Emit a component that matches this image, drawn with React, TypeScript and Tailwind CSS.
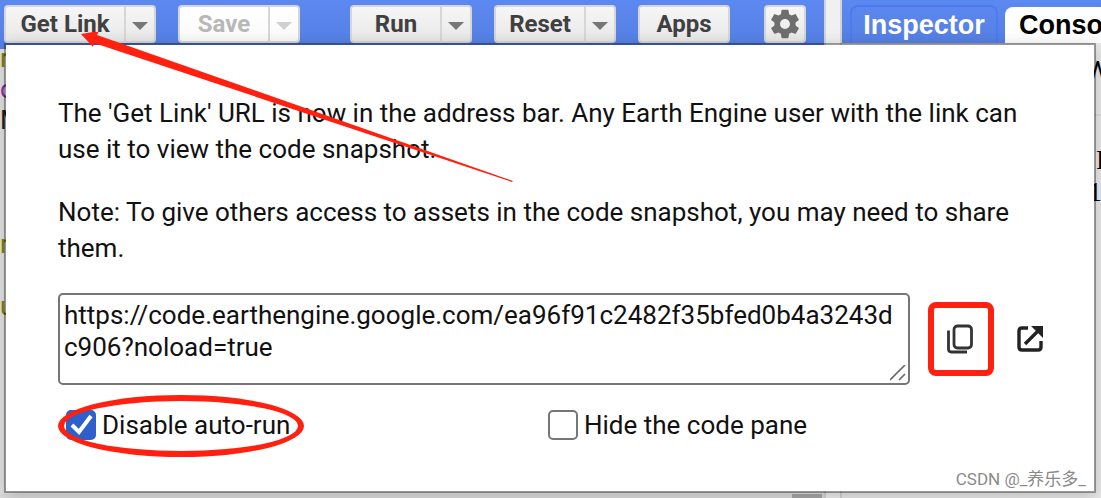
import { useState } from "react";

const buttonStyle =
  "h-[38px] border-2 border-[#d6d6d6] bg-linear-to-b from-[#f6f6f6] to-[#e8e8e8] text-[24px] leading-8 font-bold text-[#404040]";

interface SplitButtonProps {
  label: string;
  className: string;
  disabled?: boolean;
}

function SplitButton({ label, className, disabled }: SplitButtonProps) {
  return (
    <div className={`flex shrink-0 ${className}`}>
      <button
        disabled={disabled}
        className={`${buttonStyle} flex-1 rounded-l-sm border-r-0 disabled:from-white disabled:to-[#fafafa] disabled:text-[#b8b8b8]`}
      >
        {label}
      </button>
      <button
        disabled={disabled}
        aria-label={`${label} options`}
        className={`${buttonStyle} flex w-8 items-center justify-center rounded-r-sm disabled:from-white disabled:to-[#fafafa] disabled:text-[#d4d4d4]`}
      >
        <svg
          width="16"
          height="8"
          viewBox="0 0 16 8"
          className={disabled ? "mt-1 fill-[#d0d0d0]" : "mt-1 fill-[#777777]"}
        >
          <path d="M0 0h16L8 8z" />
        </svg>
      </button>
    </div>
  );
}

function GearIcon() {
  return (
    <svg width="34" height="34" viewBox="0 0 24 24" fill="#6e6e6e" className="shrink-0">
      <path d="M19.43 12.98c.04-.32.07-.64.07-.98s-.03-.66-.07-.98l2.11-1.65c.19-.15.24-.42.12-.64l-2-3.46c-.12-.22-.39-.3-.61-.22l-2.49 1c-.52-.4-1.08-.73-1.69-.98l-.38-2.65A.488.488 0 0 0 14 2h-4c-.25 0-.46.18-.49.42l-.38 2.65c-.61.25-1.17.59-1.69.98l-2.49-1c-.23-.09-.49 0-.61.22l-2 3.46c-.13.22-.07.49.12.64l2.11 1.65c-.04.32-.07.65-.07.98s.03.66.07.98l-2.11 1.65c-.19.15-.24.42-.12.64l2 3.46c.12.22.39.3.61.22l2.49-1c.52.4 1.08.73 1.69.98l.38 2.65c.03.24.24.42.49.42h4c.25 0 .46-.18.49-.42l.38-2.65c.61-.25 1.17-.59 1.69-.98l2.49 1c.23.09.49 0 .61-.22l2-3.46c.12-.22.07-.49-.12-.64l-2.11-1.65zM12 15.5c-1.93 0-3.5-1.57-3.5-3.5s1.57-3.5 3.5-3.5 3.5 1.57 3.5 3.5-1.57 3.5-3.5 3.5z" />
    </svg>
  );
}

function CopyIcon() {
  return (
    <svg width="28" height="30" viewBox="0 0 28 30" fill="none" stroke="#333333" strokeWidth="2.8">
      <rect x="7" y="2" width="17.5" height="22" rx="3.5" />
      <path d="M1.5 6.5V25q0 3 3 3H20" />
    </svg>
  );
}

function OpenIcon() {
  return (
    <svg width="28" height="28" viewBox="0 0 28 28" fill="none" stroke="#222222" strokeWidth="3.4">
      <path d="M12 3H6Q3 3 3 6v16q0 3 3 3h16q3 0 3-3v-6" />
      <path d="M9 19L22 6" />
      <path d="M15 1h12v12z" fill="#222222" stroke="none" />
    </svg>
  );
}

interface CheckOptionProps {
  label: string;
  checked: boolean;
  onChange: (checked: boolean) => void;
}

function CheckOption({ label, checked, onChange }: CheckOptionProps) {
  return (
    <label className="flex items-center gap-1.5">
      <span className="grid">
        <input
          type="checkbox"
          checked={checked}
          onChange={(e) => onChange(e.target.checked)}
          className="col-start-1 row-start-1 size-[30px] appearance-none rounded-[5px] border-2 border-[#767676] bg-white checked:border-[#2f5fcb] checked:bg-[#2f5fcb]"
        />
        {checked && (
          <svg
            viewBox="0 0 30 30"
            className="pointer-events-none col-start-1 row-start-1 size-[30px]"
            fill="none"
            stroke="white"
            strokeWidth="4"
          >
            <path d="M6 15l7 7L25 6" />
          </svg>
        )}
      </span>
      {label}
    </label>
  );
}

function LinkDialog() {
  const [noRun, setNoRun] = useState(true);
  const [hideCode, setHideCode] = useState(false);

  return (
    <div
      role="dialog"
      aria-label="Get Link"
      className="absolute top-[43px] right-[5px] left-1 border-2 border-black/35 bg-white bg-clip-padding pt-[50px] pr-[50px] pb-[48px] pl-[52px] text-[26px] leading-9 text-[#111111] shadow-[0_4px_16px_rgba(0,0,0,0.2)]"
    >
      <p className="mb-[27px]">
        The 'Get Link' URL is now in the address bar. Any Earth Engine user with the link can use it
        to view the code snapshot.
      </p>
      <p className="mb-[27px]">
        Note: To give others access to assets in the code snapshot, you may need to share them.
      </p>
      <div className="flex items-center">
        <textarea
          aria-label="Script link"
          rows={2}
          defaultValue="https://code.earthengine.google.com/ea96f91c2482f35bfed0b4a3243dc906?noload=true"
          className="block h-[92px] min-w-0 flex-1 resize-none rounded-[5px] border-2 border-[#767676] px-1 py-1 leading-8 break-all"
        />
        {/* resize grip sits in the corner of the text box */}
        <svg width="16" height="16" viewBox="0 0 16 16" className="mb-1 -ml-5 self-end" stroke="#666666">
          <path d="M0 15L15 0M9 15l6-6" strokeWidth="1.6" />
        </svg>
        <button
          aria-label="Copy link"
          className="ml-[22px] flex h-[74px] w-[66px] items-center justify-center rounded-lg border-6 border-[#ff2010]"
        >
          <CopyIcon />
        </button>
        <button aria-label="Open link" className="ml-[22px] flex h-[74px] w-7 items-center justify-center">
          <OpenIcon />
        </button>
      </div>
      <div className="mt-[22px] grid grid-cols-[490px_1fr] items-center">
        <div className="relative pl-2">
          <CheckOption label="Disable auto-run" checked={noRun} onChange={setNoRun} />
          <div className="pointer-events-none absolute -top-3 left-0 h-[62px] w-[246px] rounded-[50%] border-6 border-[#ff2010]" />
        </div>
        <CheckOption label="Hide the code pane" checked={hideCode} onChange={setHideCode} />
      </div>
      <span className="absolute right-2 bottom-0 text-[17px] leading-6 text-[#8a8a8a]">
        CSDN @_养乐多_
      </span>
    </div>
  );
}

function EditorPane() {
  return (
    <section className="flex w-[824px] shrink-0 flex-col bg-[#e4e4e4]">
      <header className="flex h-[49px] shrink-0 items-start bg-linear-to-b from-[#5c88f1] to-[#5580e3] pt-[5px] pl-1">
        <SplitButton label="Get Link" className="w-[152px]" />
        <SplitButton label="Save" className="ml-[22px] w-[122px]" disabled />
        <SplitButton label="Run" className="ml-[50px] w-[122px]" />
        <SplitButton label="Reset" className="ml-[22px] w-[122px]" />
        <button className={`${buttonStyle} ml-[22px] w-[92px] rounded-sm`}>Apps</button>
        <button
          aria-label="Settings"
          className={`${buttonStyle} ml-[34px] flex w-[42px] items-center justify-center rounded-sm`}
        >
          <GearIcon />
        </button>
      </header>
      <pre className="-mt-1.5 flex-1 font-['Roboto',sans-serif] text-[26px] leading-[31px] text-[#808000]">
        {"r\n"}
        <span className="text-[#8b2fa8]">{"c\n"}</span>
        <span className="text-[#222222]">{"M\n"}</span>
        {"\n\n\nr\n\nu"}
      </pre>
      <div className="flex h-1 justify-end bg-[#dedede]">
        <div className="mr-0.5 w-[30px] bg-[#a8a8a8]" />
      </div>
    </section>
  );
}

function ConsolePane() {
  return (
    <section className="flex min-w-0 flex-1 flex-col bg-[#eaeaea]">
      <header className="flex h-[43px] shrink-0 items-end gap-[7px] overflow-hidden bg-linear-to-b from-[#5c88f1] to-[#5580e3] pl-2 font-['Liberation_Sans',sans-serif] text-[27px] leading-9 font-bold">
        <button className="h-[38px] w-[148px] shrink-0 rounded-t-lg border-2 border-b-0 border-[#4a7bef] leading-8 text-white">
          Inspector
        </button>
        <button className="h-[36px] shrink-0 rounded-t-lg bg-white px-3.5 leading-8 text-black">
          Console
        </button>
      </header>
      <div className="flex h-[73px] shrink-0 items-center border-b-2 border-[#dcdcdc] pb-4 pl-[244px] text-[26px] leading-8">
        W
      </div>
      <div className="pt-7 pl-[246px] font-['Liberation_Serif',serif] text-[28px] leading-8">
        <p className="pl-2">F</p>
        <p>1</p>
      </div>
    </section>
  );
}

export default function App() {
  return (
    <main className="relative flex min-h-screen w-full overflow-hidden font-['Roboto','Noto_Sans_CJK_SC',sans-serif]">
      <EditorPane />
      <div className="w-[18px] shrink-0 border-x-2 border-[#d4d4d4] bg-[#f0f0f0]" />
      <ConsolePane />
      <LinkDialog />
      <svg
        width="434"
        height="152"
        viewBox="0 0 434 152"
        className="pointer-events-none absolute top-8 left-20"
        fill="#ff2010"
      >
        <path d="M1 2L19 -1L17 3L433 149L432 150L14 11L13 15z" />
      </svg>
    </main>
  );
}
